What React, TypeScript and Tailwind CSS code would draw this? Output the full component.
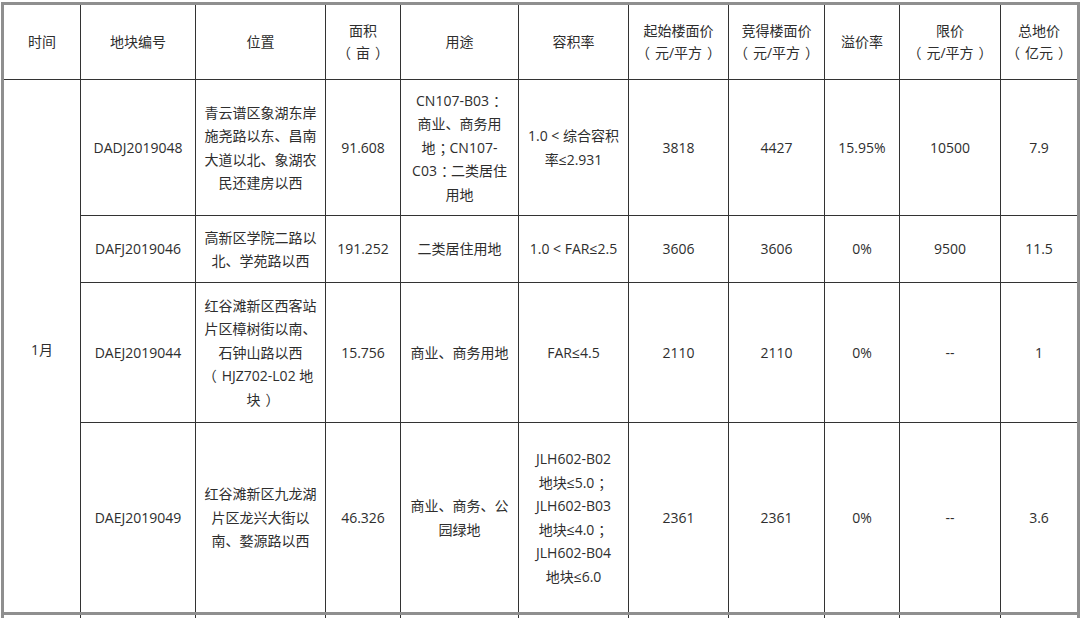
import React from 'react'

type Row = {
  code: string
  place: string[]
  area: string
  use: string[]
  far: string[]
  start: string
  deal: string
  premium: string
  limit: string
  total: string
  h: string
}

const head: string[][] = [
  ['时间'],
  ['地块编号'],
  ['位置'],
  ['面积', '（亩）'],
  ['用途'],
  ['容积率'],
  ['起始楼面价', '（元/平方）'],
  ['竞得楼面价', '（元/平方）'],
  ['溢价率'],
  ['限价', '（元/平方）'],
  ['总地价', '（亿元）'],
]

const rows: Row[] = [
  {
    code: 'DADJ2019048',
    place: ['青云谱区象湖东岸', '施尧路以东、昌南', '大道以北、象湖农', '民还建房以西'],
    area: '91.608',
    use: ['CN107-B03：', '商业、商务用', '地；CN107-', 'C03：二类居住', '用地'],
    far: ['1.0 < 综合容积', '率≤2.931'],
    start: '3818',
    deal: '4427',
    premium: '15.95%',
    limit: '10500',
    total: '7.9',
    h: 'h-[136px]',
  },
  {
    code: 'DAFJ2019046',
    place: ['高新区学院二路以', '北、学苑路以西'],
    area: '191.252',
    use: ['二类居住用地'],
    far: ['1.0 < FAR≤2.5'],
    start: '3606',
    deal: '3606',
    premium: '0%',
    limit: '9500',
    total: '11.5',
    h: 'h-[67px]',
  },
  {
    code: 'DAEJ2019044',
    place: ['红谷滩新区西客站', '片区樟树街以南、', '石钟山路以西', '（HJZ702-L02 地', '块）'],
    area: '15.756',
    use: ['商业、商务用地'],
    far: ['FAR≤4.5'],
    start: '2110',
    deal: '2110',
    premium: '0%',
    limit: '--',
    total: '1',
    h: 'h-[140px]',
  },
  {
    code: 'DAEJ2019049',
    place: ['红谷滩新区九龙湖', '片区龙兴大街以', '南、婺源路以西'],
    area: '46.326',
    use: ['商业、商务、公', '园绿地'],
    far: ['JLH602-B02', '地块≤5.0；', 'JLH602-B03', '地块≤4.0；', 'JLH602-B04', '地块≤6.0'],
    start: '2361',
    deal: '2361',
    premium: '0%',
    limit: '--',
    total: '3.6',
    h: 'h-[191px]',
  },
]

// full-width punctuation sits centered in the reference font, nudge the glyphs
function Line({ text }: { text: string }) {
  const parts = text.split(/([（）：；])/).filter(Boolean)
  return (
    <div className="whitespace-nowrap">
      {parts.map((p, i) => {
        if (p === '（') return <span key={i} className="relative -left-[5px]">{p}</span>
        if (p === '）') return <span key={i} className="relative left-[5px]">{p}</span>
        if (p === '：' || p === '；') return <span key={i} className="relative left-[4px]">{p}</span>
        return <React.Fragment key={i}>{p}</React.Fragment>
      })}
    </div>
  )
}

function Lines({ lines }: { lines: string[] }) {
  return (
    <>
      {lines.map((l, i) => (
        <Line key={i} text={l} />
      ))}
    </>
  )
}

const td = 'border border-[#333] text-center align-middle px-1'
const thick = 'border-b-[3px] border-b-[#8f8f8f]'

export default function App() {
  return (
    <div className="min-h-screen bg-white pt-[2px] pl-px font-['Open_Sans','Noto_Sans_CJK_SC',sans-serif] text-[14px] text-[#2e2e2e]">
      <table className="w-[1076px] table-fixed border-collapse border-[3px] border-[#8f8f8f]">
        <colgroup>
          <col className="w-[78px]" />
          <col className="w-[115px]" />
          <col className="w-[130px]" />
          <col className="w-[75px]" />
          <col className="w-[118px]" />
          <col className="w-[110px]" />
          <col className="w-[100px]" />
          <col className="w-[96px]" />
          <col className="w-[75px]" />
          <col className="w-[101px]" />
          <col className="w-[78px]" />
        </colgroup>
        <thead>
          <tr className="h-[76px] leading-[22px]">
            {head.map((h, i) => (
              <th key={i} className={`${td} font-normal`}>
                <Lines lines={h} />
              </th>
            ))}
          </tr>
        </thead>
        <tbody className="leading-[23.5px]">
          {rows.map((r, i) => (
            <tr key={r.code} className={r.h}>
              {i === 0 && (
                <td rowSpan={4} className={`${td} ${thick}`}>
                  <span className="pt-[8px] inline-block">1月</span>
                </td>
              )}
              {[
                [r.code],
                r.place,
                [r.area],
                r.use,
                r.far,
                [r.start],
                [r.deal],
                [r.premium],
                [r.limit],
                [r.total],
              ].map((c, j) => (
                <td key={j} className={`${td} ${i === 3 ? thick : ''}`}>
                  <Lines lines={c} />
                </td>
              ))}
            </tr>
          ))}
          <tr className="h-[40px]">
            {head.map((_, j) => (
              <td key={j} className={td} />
            ))}
          </tr>
        </tbody>
      </table>
    </div>
  )
}
